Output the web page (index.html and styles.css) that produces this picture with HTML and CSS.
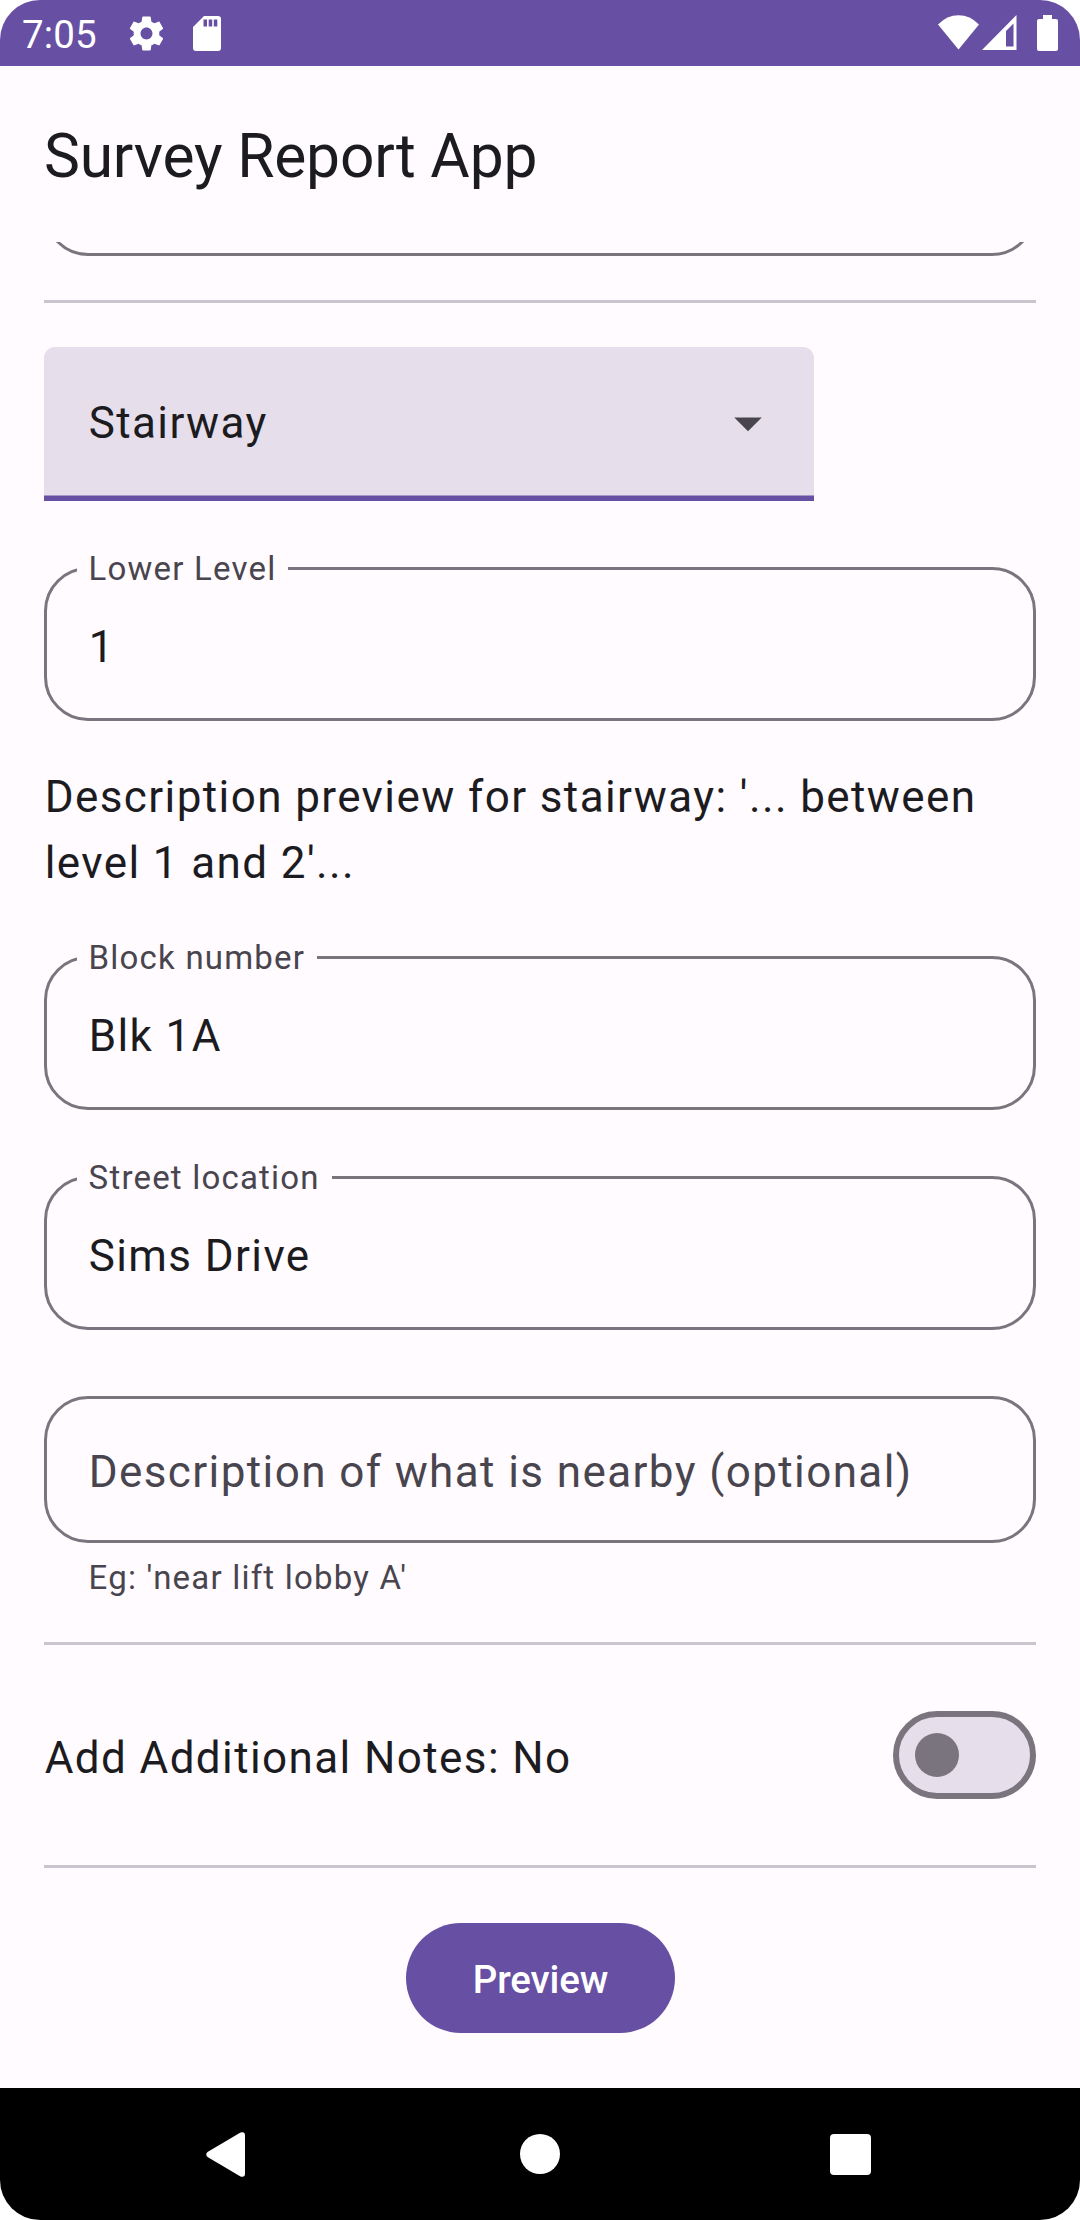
FILE: index.html
```html
<!DOCTYPE html>
<html lang="en">
<head>
<meta charset="utf-8">
<title>Survey Report App</title>
<link rel="stylesheet" href="styles.css">
</head>
<body>
<div class="phone">
  <div class="status-bar">
    <span class="clock">7:05</span>
    <svg class="icon-settings" viewBox="0 0 24 24"><path d="M19.43 12.98c.04-.32.07-.64.07-.98s-.03-.66-.07-.98l2.11-1.65c.19-.15.24-.42.12-.64l-2-3.46c-.12-.22-.39-.3-.61-.22l-2.49 1c-.52-.4-1.08-.73-1.69-.98l-.38-2.65C14.46 2.18 14.25 2 14 2h-4c-.25 0-.46.18-.49.42l-.38 2.65c-.61.25-1.17.59-1.69.98l-2.49-1c-.23-.09-.49 0-.61.22l-2 3.46c-.13.22-.07.49.12.64l2.11 1.65c-.04.32-.07.65-.07.98s.03.66.07.98l-2.11 1.65c-.19.15-.24.42-.12.64l2 3.46c.12.22.39.3.61.22l2.49-1c.52.4 1.08.73 1.69.98l.38 2.65c.03.24.24.42.49.42h4c.25 0 .46-.18.49-.42l.38-2.65c.61-.25 1.17-.59 1.69-.98l2.49 1c.23.09.49 0 .61-.22l2-3.46c.12-.22.07-.49-.12-.64l-2.11-1.65zM12 15.5c-1.93 0-3.5-1.57-3.5-3.5s1.57-3.5 3.5-3.5 3.5 1.57 3.5 3.5-1.57 3.5-3.5 3.5z"/></svg>
    <svg class="icon-sd" viewBox="0 0 28 35"><path d="M11 0H25Q28 0 28 3V32Q28 35 25 35H3Q0 35 0 32V11ZM10.500 3.500V10.500H14V3.500ZM15.700 3.500V10.500H19.200V3.500ZM20.800 3.500V10.500H24.300V3.500Z" fill-rule="evenodd"/></svg>
    <svg class="icon-wifi" viewBox="0 0 41 35"><path d="M20.500 34.500L0 9.500Q9 .3 20.500 .3T41 9.500Z"/></svg>
    <svg class="icon-signal" viewBox="0 0 35 35"><path d="M34.500 0V35H0ZM31.500 8.500L24 16V31.500H31.500Z" fill-rule="evenodd"/></svg>
    <svg class="icon-battery" viewBox="0 0 21 36"><path d="M6 0H15V4H19Q21 4 21 6V34Q21 36 19 36H2Q0 36 0 34V6Q0 4 2 4H6Z"/></svg>
  </div>
  <header class="app-bar"><h1>Survey Report App</h1></header>
  <main class="content">
    <div class="scrolled-edge"><div class="scrolled-field"></div></div>
    <hr class="divider">
    <div class="dropdown">
      <span>Stairway</span>
      <svg class="icon-caret" viewBox="0 0 24 24"><path d="M7 10l5 5 5-5z"/></svg>
    </div>
    <fieldset class="field field-level"><legend>Lower Level</legend><div class="value">1</div></fieldset>
    <p class="description">Description preview for stairway: '... between level 1 and 2'...</p>
    <fieldset class="field field-block"><legend>Block number</legend><div class="value">Blk 1A</div></fieldset>
    <fieldset class="field field-street"><legend>Street location</legend><div class="value">Sims Drive</div></fieldset>
    <div class="empty-field">Description of what is nearby (optional)</div>
    <p class="helper">Eg: 'near lift lobby A'</p>
    <hr class="divider">
    <div class="notes-row">
      <span class="notes-label">Add Additional Notes: No</span>
      <div class="switch"><div class="thumb"></div></div>
    </div>
    <hr class="divider">
    <button class="preview" type="button">Preview</button>
  </main>
  <nav class="nav-bar">
    <svg class="nav-back" viewBox="0 0 39 45"><path d="M34.500 .6Q39 -.8 39 3.500V41.500Q39 45.800 34.500 44.400L1.500 25Q-1 22.500 1.500 20Z"/></svg>
    <svg class="nav-home" viewBox="0 0 40 40"><circle cx="20" cy="20" r="20"/></svg>
    <svg class="nav-recent" viewBox="0 0 41 41"><rect width="41" height="41" rx="4"/></svg>
  </nav>
</div>
</body>
</html>
```
FILE: styles.css
```css
* { box-sizing: border-box; }

body {
  margin: 0;
  background: #fff;
  color: #1c1b1f;
  font: 44px/66px Roboto, sans-serif;
  letter-spacing: 1.4px;
}

svg { display: block; flex: none; }

.phone {
  display: flex;
  flex-direction: column;
  width: 1080px;
  height: 2220px;
  overflow: hidden;
  border-radius: 40px;
  background: #fffbfe;
}

.status-bar {
  display: flex;
  align-items: flex-start;
  height: 66px;
  flex: none;
  padding: 15px 22px 0;
  background: #6750a4;
  color: #fff;
}
.status-bar svg { fill: #fff; }

.clock {
  width: 104px;
  font-size: 38.5px;
  line-height: 40px;
  letter-spacing: 0.1px;
}
.icon-settings { width: 41px; height: 41px; margin-top: -2px; }
.icon-sd { width: 28px; height: 35px; margin: 1px 0 0 26px; }
.icon-wifi { width: 41px; height: 35px; margin-left: auto; }
.icon-signal { width: 35px; height: 35px; margin: 0 20px 0 3px; }
.icon-battery { width: 21px; height: 36px; }

.app-bar {
  display: flex;
  align-items: center;
  height: 176px;
  flex: none;
  padding: 4px 44px 0;
}
h1 {
  margin: 0;
  font-size: 60.5px;
  font-weight: 400;
  line-height: 77px;
  letter-spacing: -0.2px;
}

.content {
  flex: 1;
  display: flex;
  flex-direction: column;
  padding: 0 44px;
}

.scrolled-edge {
  display: flex;
  align-items: flex-end;
  height: 14px;
  overflow: hidden;
}
.scrolled-field {
  flex: 1 0 auto;
  height: 154px;
  border: 3px solid #79747e;
  border-radius: 44px;
}

.divider {
  width: 100%;
  height: 3px;
  margin: 44px 0;
  border: 0;
  background: #cac4d0;
}

.dropdown {
  display: flex;
  align-items: center;
  justify-content: space-between;
  width: 770px;
  height: 154px;
  padding: 0 33px 2px 44.7px;
  border-radius: 11px 11px 0 0;
  background: linear-gradient(to top, #6750a4 5px, #a698c4 5px, #a698c4 6px, #e6dfeb 6px);
}
.icon-caret { width: 66px; height: 66px; fill: #49454f; }

.field {
  min-width: 0;
  height: 175px;
  margin: 0;
  padding: 23px 41px 0 30px;
  border: 3px solid #79747e;
  border-radius: 44px;
}
.field legend {
  padding: 0 12px 0 11.6px;
  font-size: 33px;
  line-height: 45px;
  letter-spacing: 1.2px;
  color: #49454f;
}
.value { padding-left: 11.7px; }
.field-level { margin-top: 45px; }
.field-block { margin-top: 39px; }
.field-street { margin-top: 45px; }

.description { margin: 43px 0 0; padding-left: 0.7px; }

.empty-field {
  height: 147px;
  margin-top: 66px;
  padding: 40px 41px 0 41.7px;
  border: 3px solid #79747e;
  border-radius: 44px;
  color: #49454f;
}
.helper {
  margin: 13px 44px -2px 44.6px;
  font-size: 33px;
  line-height: 44px;
  letter-spacing: 1.2px;
  color: #49454f;
}

.notes-row {
  display: flex;
  align-items: center;
  justify-content: space-between;
  margin: 22px 0;
}
.notes-label { padding: 6px 0 0 0.7px; }
.switch {
  display: flex;
  align-items: center;
  width: 143px;
  height: 88px;
  padding-left: 16px;
  border: 6px solid #79747e;
  border-radius: 44px;
  background: #e6dfeb;
}
.thumb {
  width: 44px;
  height: 44px;
  border-radius: 50%;
  background: #79747e;
}

.preview {
  align-self: center;
  width: 269px;
  height: 110px;
  margin-top: 11px;
  padding: 3px 0 0 1px;
  border: 0;
  border-radius: 55px;
  background: #6750a4;
  color: #fff;
  font: 500 38.5px/55px Roboto, sans-serif;
  letter-spacing: -0.1px;
}

.nav-bar {
  display: flex;
  justify-content: space-between;
  align-items: center;
  height: 132px;
  flex: none;
  padding: 0 209px 0 206px;
  background: #000;
}
.nav-bar svg { fill: #fff; }
.nav-back { width: 39px; height: 45px; }
.nav-home { width: 40px; height: 40px; margin-left: 5px; }
.nav-recent { width: 41px; height: 41px; }
```
